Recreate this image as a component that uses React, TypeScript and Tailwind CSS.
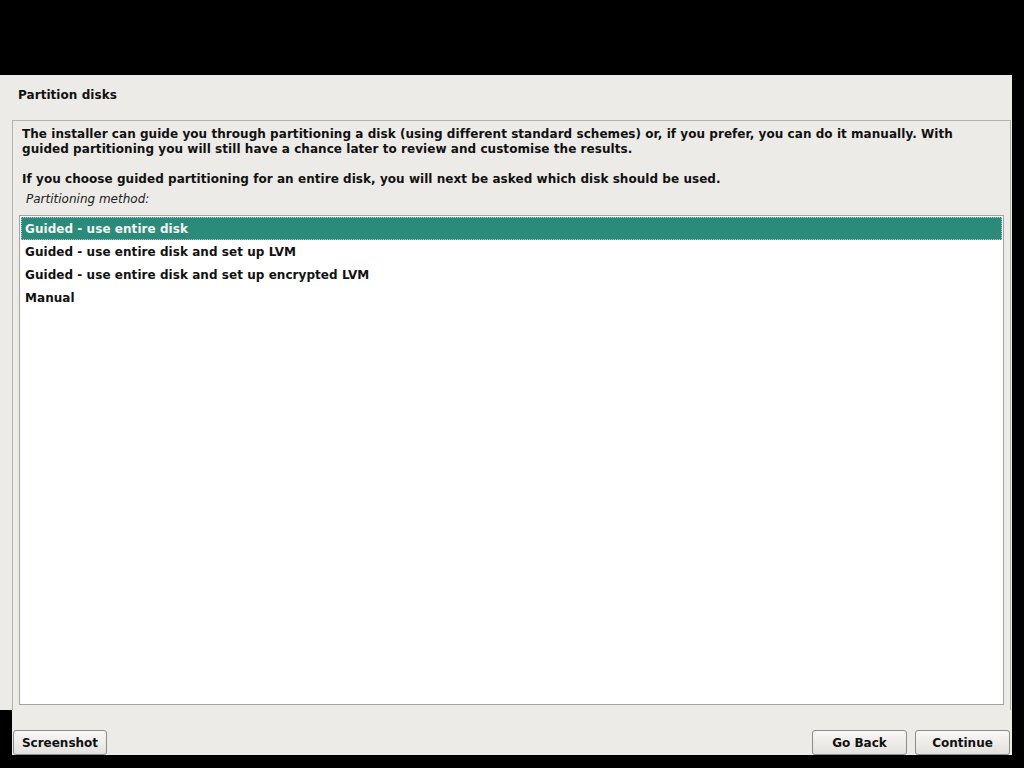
const options = [
  'Guided - use entire disk',
  'Guided - use entire disk and set up LVM',
  'Guided - use entire disk and set up encrypted LVM',
  'Manual',
];

function Button({ label, width }: { label: string; width: string }) {
  return (
    <button
      className={`${width} h-[25px] rounded-[3px] border border-[#8e8c88] bg-gradient-to-b from-[#f8f7f6] to-[#e4e2de] text-[12px] font-bold text-[#111] leading-none`}
    >
      {label}
    </button>
  );
}

export default function App() {
  const selected = 0;

  return (
    <div
      className="w-[1024px] h-[768px] bg-black flex flex-col overflow-hidden"
      style={{ fontFamily: '"DejaVu Sans", "Liberation Sans", sans-serif' }}
    >
      <div className="h-[75px] shrink-0" />

      {/* Main window */}
      <div className="w-[1012px] h-[635px] bg-[#edebe7] flex flex-col shrink-0">
        <div className="h-[45px] shrink-0 pl-[18px] pt-[13px] text-[12px] font-bold text-[#111] leading-[15px] tracking-[0.05px]">
          Partition disks
        </div>

        <div className="ml-[12px] w-[999px] flex-1 border-t border-l border-r border-[#b4b2ae] flex flex-col min-h-0">
          <div className="pl-[9px] pt-[6px] text-[12px] font-bold text-[#111] leading-[15px] tracking-[0.05px]">
            <p>
              The installer can guide you through partitioning a disk (using different standard schemes) or, if you prefer, you can do it manually. With
              <br />
              guided partitioning you will still have a chance later to review and customise the results.
            </p>
            <p className="mt-[15px]">
              If you choose guided partitioning for an entire disk, you will next be asked which disk should be used.
            </p>
          </div>
          <div className="pl-[13px] pt-[5px] text-[12px] italic text-[#222] leading-[15px]">Partitioning method:</div>

          <div className="ml-[6px] mt-[8px] w-[985px] h-[490px] border border-[#a6a4a0] bg-white p-[1px] shrink-0">
            {options.map((o, i) => (
              <div
                key={o}
                className={
                  i === selected
                    ? 'h-[23px] pl-[3px] flex items-center bg-[#2b8a79] text-[#f4f4f4] text-[12px] font-bold tracking-[0.05px] border border-dotted border-[#9fd3c8]'
                    : 'h-[23px] pl-[4px] flex items-center text-[#111] text-[12px] font-bold tracking-[0.05px]'
                }
              >
                {o}
              </div>
            ))}
          </div>
        </div>
      </div>

      {/* Button row */}
      <div className="h-[45px] flex shrink-0">
        <div className="w-[12px] bg-black" />
        <div className="w-[1000px] bg-[#edebe7] flex items-start pt-[20px] pl-[1px]">
          <Button label="Screenshot" width="w-[94px]" />
          <div className="flex-1" />
          <Button label="Go Back" width="w-[95px]" />
          <div className="w-[8px]" />
          <Button label="Continue" width="w-[95px]" />
          <div className="w-[2px]" />
        </div>
      </div>
    </div>
  );
}
